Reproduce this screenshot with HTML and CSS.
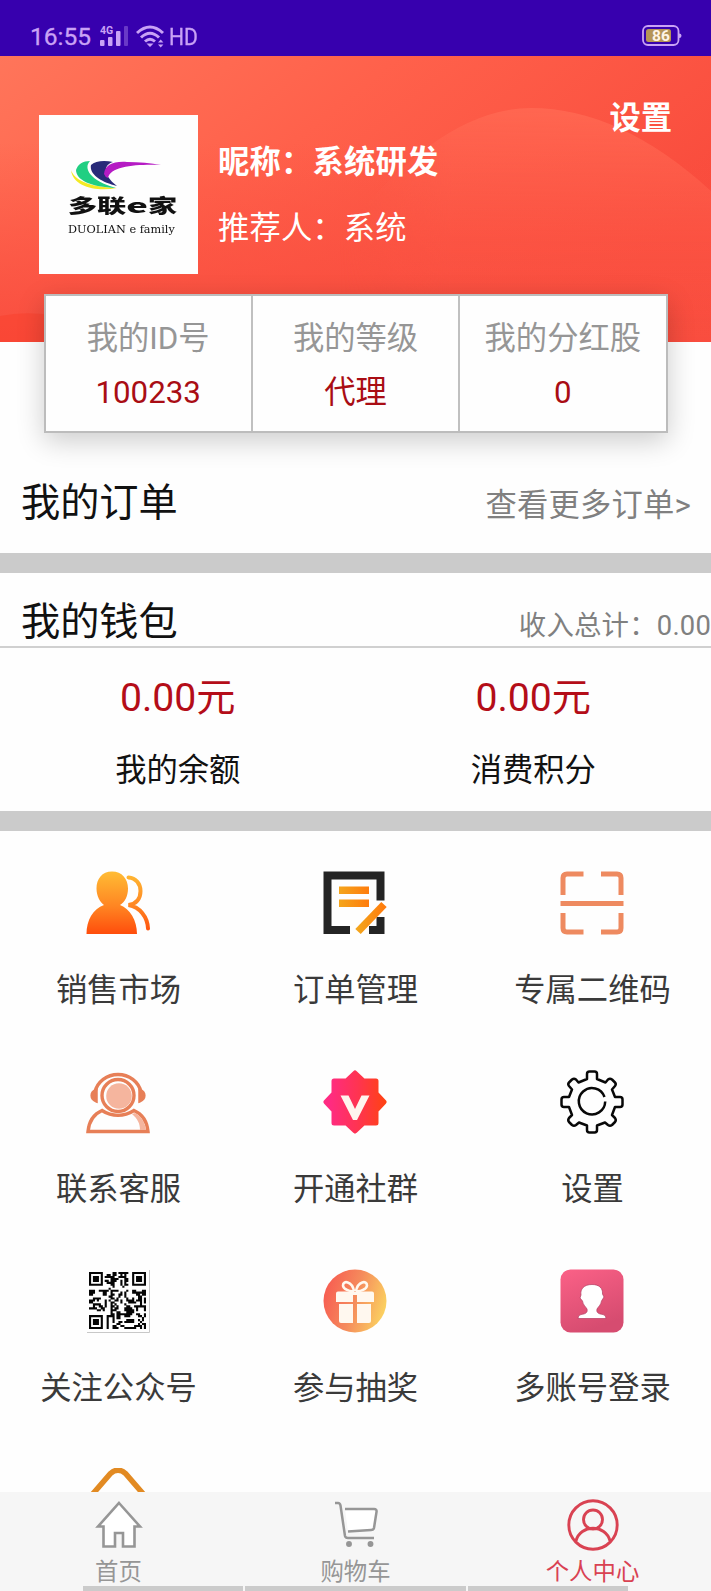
FILE: index.html
```html
<!DOCTYPE html>
<html lang="zh-CN">
<head>
<meta charset="utf-8">
<title>个人中心</title>
<link rel="stylesheet" href="styles.css">
</head>
<body>
<div class="app">
  <div class="status">
    <span class="clock">16:55</span>
    <svg class="signal" width="29" height="22" viewBox="0 0 29 22" fill="#c9a2f5"><text x="0" y="9" font-size="10.500" font-weight="700" font-family="Roboto, sans-serif">4G</text><rect x="0" y="15" width="4.500" height="6" rx="1"/><rect x="8" y="12" width="4.500" height="9" rx="1"/><rect x="16" y="6" width="4.500" height="15" rx="1"/><rect x="24" y="1" width="4" height="20" rx="1" opacity=".35"/></svg>
    <svg class="wifi" width="29" height="23" viewBox="0 0 29 23" fill="none" stroke="#c9a2f5" stroke-width="3"><path d="M1 8Q14 -4 27 8M5 12.500Q14 4 23 12.500M9 16.500Q14 12 19 16.500"/><path d="M10.500 18.500h7L14 22zM22 17.500l2.700-3 2.700 3zM22 19.500l2.700 3 2.700-3z" fill="#c9a2f5" stroke="none"/></svg>
    <span class="hd">HD</span>
    <svg class="battery" width="40" height="22" viewBox="0 0 40 22"><rect x="1" y="1" width="35.500" height="19" rx="5" fill="none" stroke="#c9a2f5" stroke-width="1.800"/><path d="M37 8.500q2.500 0 2.500 2.200t-2.500 2.200z" fill="#c9a2f5"/><rect x="4" y="4" width="25" height="13" rx="2.500" fill="#b59457"/><text x="10" y="16" font-size="15.500" font-weight="700" fill="#fff4e6" font-family="Roboto, sans-serif">86</text></svg>
  </div>

  <header class="hero">
    <svg class="hero-bg" width="711" height="286" viewBox="0 0 711 286">
      <defs>
        <linearGradient id="base" x1="0" y1="0" x2="1" y2=".5"><stop offset="0" stop-color="#ff755a"/><stop offset=".45" stop-color="#ff614b"/><stop offset="1" stop-color="#f94b3c"/></linearGradient>
        <linearGradient id="low" x1="0" y1="0" x2="0" y2="1"><stop offset=".3" stop-color="#fb4f40" stop-opacity="0"/><stop offset="1" stop-color="#f94e3f"/></linearGradient>
        <linearGradient id="hill" x1="0" y1="0" x2="0" y2="1"><stop offset="0" stop-color="#ff6852" stop-opacity=".9"/><stop offset=".55" stop-color="#fc5645" stop-opacity=".6"/><stop offset="1" stop-color="#fa5142" stop-opacity="0"/></linearGradient>
        <linearGradient id="fade" x1="0" x2="1"><stop offset="0" stop-color="#fff" stop-opacity="0"/><stop offset=".3" stop-color="#fff"/></linearGradient>
        <mask id="hillmask"><rect x="340" width="371" height="286" fill="url(#fade)"/></mask>
      </defs>
      <rect width="711" height="286" fill="url(#base)"/>
      <rect width="711" height="286" fill="url(#low)"/>
      <path d="M340 286V180Q440 52 531 52Q620 52 711 135V286Z" fill="url(#hill)" mask="url(#hillmask)"/>
      <path d="M0 260Q40 252 90 268V286H0Z" fill="#fa4532" opacity=".7"/>
    </svg>
    <div class="profile">
      <div class="avatar">
        <svg class="swoosh" width="92" height="29" viewBox="0 0 92 29"><path d="M0 9C3 18 16 26 46 27C26 31 2 26 0 9Z" fill="#f3ea25"/><path d="M5 9C7 3 12 0 19 0C12 7 19 20 45 27C20 26 5 19 5 9Z" fill="#21cf82"/><path d="M20 4C24 0 33-1 42 1C32 4 32 14 46 25C30 21 18 13 20 4Z" fill="#292a78"/><path d="M33 13C34 4 42 0 56 1C68 1 80 2 90 4C67 3 39 5 37 17Q34 16 33 13Z" fill="#b51bc4"/></svg>
        <div class="brand">多联<span>e</span>家</div>
        <div class="brand-en">DUOLIAN e family</div>
      </div>
      <div class="who">
        <div class="nick">昵称：系统研发</div>
        <div class="ref">推荐人：系统</div>
      </div>
      <div class="set">设置</div>
    </div>
  </header>

  <section class="stats">
    <div class="stat"><div class="k">我的ID号</div><div class="v">100233</div></div>
    <div class="stat"><div class="k">我的等级</div><div class="v">代理</div></div>
    <div class="stat"><div class="k">我的分红股</div><div class="v">0</div></div>
  </section>

  <section class="orders"><h2>我的订单</h2><span class="more">查看更多订单&gt;</span></section>

  <section class="wallet">
    <div class="wallet-head"><h2>我的钱包</h2><span class="total">收入总计：0.00</span></div>
    <div class="wallet-body">
      <div><div class="amount">0.00元</div><div class="label">我的余额</div></div>
      <div><div class="amount">0.00元</div><div class="label">消费积分</div></div>
    </div>
  </section>

  <main class="menu">
    <div class="item">
      <svg width="64" height="64" viewBox="0 0 64 64"><defs><linearGradient id="or" gradientUnits="userSpaceOnUse" x1="0" y1="0" x2="0" y2="64"><stop stop-color="#ffbd35"/><stop offset=".55" stop-color="#ff8522"/><stop offset="1" stop-color="#ff4b0b"/></linearGradient></defs><path d="M26 .500C16 .500 10.500 8 10.500 17.500C10.500 25 14 31 18 34C7 38 .500 49 .500 63H51C51 49 44 38 34 34C39 31 42 25 42 17.500C42 8 36 .500 26 .500Z" fill="url(#or)"/><path d="M42.500 6.500C50 7 54.500 13 54.500 20C54.500 28 50 33 42.500 34C54 36 61.500 46 62 57.500" fill="none" stroke="url(#or)" stroke-width="4" stroke-linecap="round"/></svg>
      <span>销售市场</span>
    </div>
    <div class="item">
      <svg width="64" height="64" viewBox="0 0 64 64"><defs><linearGradient id="bar"><stop stop-color="#f4a51c"/><stop offset="1" stop-color="#ff7c0c"/></linearGradient></defs><path d="M27 59H4.500V4.500H57.500V29.500M46 59H57.500V46" fill="none" stroke="#242424" stroke-width="8"/><path d="M16 15.500H46V23H16zM16 28.500H46V36H16z" fill="url(#bar)"/><path d="M35 60.500L61 33.500" stroke="url(#bar)" stroke-width="7.500"/></svg>
      <span>订单管理</span>
    </div>
    <div class="item">
      <svg width="64" height="64" viewBox="0 0 64 64" fill="none" stroke="#ee8a60" stroke-width="5"><path d="M3 24V7Q3 3 7 3H23.500M41 3H57Q61 3 61 7V24M3 42V57Q3 61 7 61H23.500M41 61H57Q61 61 61 57V42M.500 32.500H63.500"/></svg>
      <span>专属二维码</span>
    </div>
    <div class="item">
      <svg width="64" height="64" viewBox="0 0 64 64" fill="none" stroke="#e77f57" stroke-width="3.400"><path d="M9 22A23.500 22 0 0 1 55 22"/><path d="M10.500 20C4 22 4 29 10.500 31.500ZM53.500 20C60 22 60 29 53.500 31.500Z" fill="#e77f57" stroke-width="2.500"/><circle cx="32" cy="25.500" r="16"/><circle cx="33" cy="26" r="12.800" fill="#f5b59e" stroke="none"/><path d="M16 40.500C8 44 3 51 2 61.500H62C61 51 56 44 48 40.500C38 47 26 47 16 40.500Z"/><path d="M46 44C52 49 54 54 54 60H60C59 52 55 46 49 43Z" fill="#f5b59e" stroke="none"/></svg>
      <span>联系客服</span>
    </div>
    <div class="item">
      <svg width="64" height="64" viewBox="0 0 64 64"><defs><linearGradient id="vip" gradientUnits="userSpaceOnUse" x1="0" y1="0" x2="64" y2="0"><stop offset=".1" stop-color="#ff2b82"/><stop offset=".55" stop-color="#ff3450"/><stop offset="1" stop-color="#ff4310"/></linearGradient></defs><path d="M32 3L40.500 11H53V23.500L61 32L53 40.500V53H40.500L32 61L23.500 53H11V40.500L3 32L11 23.500V11H23.500Z" fill="url(#vip)" stroke="url(#vip)" stroke-width="5" stroke-linejoin="round"/><path d="M17.500 25.500H25.500L32 39L38.500 25.500H46.500L34 50H30Z" fill="#fff5ee"/></svg>
      <span>开通社群</span>
    </div>
    <div class="item">
      <svg width="64" height="64" viewBox="0 0 64 64" fill="none" stroke="#080808" stroke-width="2.500" stroke-linejoin="round"><path d="M27 9V4Q27 1.500 29.500 1.500H34.500Q37 1.500 37 4V9L45.500 12.500L48 9.500Q50 8 52 9.500L55 12.500Q56.500 14 55 16L52 19.500L55 27H60Q62.500 27 62.500 29.500V34.500Q62.500 37 60 37H55L52 45L55 48Q56.500 50 55 52L52 55Q50 56.500 48 55L45 52.500L37 55.500V60Q37 62.500 34.500 62.500H29.500Q27 62.500 27 60V55.500L19 52.500L16 55Q14 56.500 12 55L9 52Q7.500 50 9 48L12 45L9 37H4Q1.500 37 1.500 34.500V29.500Q1.500 27 4 27H9L12 19.500L9 16Q7.500 14 9 12.500L12 9.500Q14 8 16 9.500L18.500 12.500Z"/><path d="M44.500 27A13.200 13.200 0 1 0 45.200 31.500"/></svg>
      <span>设置</span>
    </div>
    <div class="item">
      <svg id="qr" width="64" height="64" viewBox="0 0 64 64"><path d="M1 63.500H63.500V1" fill="none" stroke="#c8c8c8"/></svg>
      <span>关注公众号</span>
    </div>
    <div class="item">
      <svg width="64" height="64" viewBox="0 0 64 64"><defs><linearGradient id="gift" x1="0" y1=".3" x2="1" y2=".6"><stop stop-color="#f75b51"/><stop offset=".5" stop-color="#f58b5c"/><stop offset="1" stop-color="#fbd260"/></linearGradient></defs><circle cx="32" cy="32" r="31.500" fill="url(#gift)"/><g fill="#fff8ef"><path d="M15 22.500H49Q51 22.500 51 24.500V33H34V26H30V33H13V24.500Q13 22.500 15 22.500Z"/><path d="M16 35H30V54H18Q16 54 16 52ZM34 35H48V52Q48 54 46 54H34Z"/></g><path d="M31 22C27 23 20 20 20 16.500C20 11 29 12 31 22M33 22C37 23 44 20 44 16.500C44 11 35 12 33 22" fill="none" stroke="#fff8ef" stroke-width="2.600"/></svg>
      <span>参与抽奖</span>
    </div>
    <div class="item">
      <svg width="64" height="64" viewBox="0 0 64 64"><defs><linearGradient id="acc" x1="0" y1="0" x2=".4" y2="1"><stop stop-color="#fb6187"/><stop offset="1" stop-color="#d64c70"/></linearGradient></defs><rect x=".5" y=".5" width="63" height="63" rx="10" fill="url(#acc)"/><path d="M32 15.500C24 15.500 20 20 21 26L20 29L22.500 32C23 36 26 38 27 40C28 44 25 45 21 45.500Q18 46 18 49.500H46Q46 46 43 45.500C39 45 36 44 37 40C38 38 41 36 41.500 32L44 28L42.500 25C43 19 39 15.500 32 15.500Z" fill="#fff" stroke="#b13c61" stroke-width=".7"/></svg>
      <span>多账号登录</span>
    </div>
    <div class="item">
      <svg width="64" height="64" viewBox="0 0 64 64"><path d="M5 28L24.500 5.500Q32 -1 39.500 5.500L59 28" fill="none" stroke="#e28a22" stroke-width="5.500"/></svg>
    </div>
  </main>

  <nav class="tabs">
    <div class="tab">
      <svg width="50" height="50" viewBox="0 0 50 50"><path d="M25 3L46 26.500H40.500V46.500H29V33H21V46.500H9.500V26.500H4Z" fill="#fff" stroke="#969696" stroke-width="2.600"/></svg>
      <span>首页</span>
    </div>
    <div class="tab">
      <svg width="50" height="50" viewBox="0 0 50 50" fill="none" stroke="#969696" stroke-width="2.500"><path d="M14 9H45L41 30L17 31.500Z" fill="#fff" stroke="none"/><path d="M4 3H7Q9 3 9.500 5.500L14 36Q14.500 38 17 38H43M14 9H43Q46 9 45.500 12L43 28Q42.500 30 40 30L17 31.500"/><circle cx="18" cy="44" r="1.700" fill="#969696"/><circle cx="39.500" cy="44" r="1.700" fill="#969696"/></svg>
      <span>购物车</span>
    </div>
    <div class="tab active">
      <svg width="54" height="54" viewBox="0 0 54 54" fill="none" stroke="#d94252" stroke-width="2.900"><circle cx="27" cy="27" r="24.200"/><circle cx="27" cy="21.500" r="9.500"/><path d="M10 43C14 26 40 26 44 43"/></svg>
      <span>个人中心</span>
    </div>
    <div class="strip"><i></i><i class="mid"></i><i></i></div>
  </nav>
</div>
<script src="qr.js"></script>
</body>
</html>
```
FILE: styles.css
```css
* { box-sizing: border-box; }
body { margin: 0; background: #fefefe; font-family: Roboto, "Noto Sans CJK SC", sans-serif; font-size: 31.300px; color: #111; }
svg { display: block; flex: none; }
.app { width: 711px; height: 1591px; overflow: hidden; display: flex; flex-direction: column; position: relative; }
.status { height: 56px; flex: none; background: #3700ae; display: flex; align-items: flex-start; padding: 25px 29px 0 30px; color: #c9a2f5; }
.clock { font-size: 24.500px; line-height: 24px; width: 70px; -webkit-text-stroke: .3px; }
.signal { width: 29px; }
.wifi { margin-left: 7px; }
.hd { font-size: 24.500px; line-height: 24px; margin-left: 4px; transform: scaleX(.86); transform-origin: left; -webkit-text-stroke: .3px; }
.battery { margin-left: auto; width: 40px; }

.hero { height: 286px; flex: none; position: relative; overflow: hidden; }
.hero-bg { position: absolute; inset: 0; }
.profile { position: relative; display: flex; align-items: flex-start; padding: 59px 39px 0 39px; color: #fff; }
.avatar { width: 159px; height: 159px; background: #fefefe; color: #111; display: flex; flex-direction: column; align-items: center; padding-top: 46px; }
.swoosh { margin-right: 4px; }
.brand { font: 900 27px/30px "Noto Sans CJK SC", sans-serif; white-space: nowrap; height: 30px; margin-left: 8px; transform: scale(1.08, .72); }
.brand span { font-size: 25px; display: inline-block; transform: scaleX(1.350); width: 20px; text-align: center; }
.brand-en { font: 11.500px/14px "DejaVu Serif", serif; white-space: nowrap; margin: 2px 0 0 6px; transform: scaleX(.98); }
.who { margin-left: 20px; padding-top: 25px; }
.nick { font-weight: 700; line-height: 46px; letter-spacing: .2px; }
.ref { line-height: 46px; margin-top: 20px; letter-spacing: .15px; }
.set { margin-left: auto; margin-top: -19px; font-weight: 700; line-height: 46px; }

.stats { position: relative; flex: none; width: 624px; height: 139px; margin: -48px 0 0 43.500px; display: flex; background: #fefefe; border: 2px solid #bcbcbc; box-shadow: 0 8px 26px rgba(0,0,0,.2); text-align: center; }
.stat { flex: 1; padding-top: 20px; }
.stat + .stat { border-left: 2px solid #c0c0c0; }
.k { color: #969696; line-height: 46px; }
.v { color: #a90d14; line-height: 46px; margin-top: 8px; }

h2 { margin: 0; font-weight: 400; font-size: 39.200px; line-height: 58px; }
.orders { height: 140px; flex: none; display: flex; justify-content: space-between; padding: 41px 20px 0 21px; border-bottom: 20px solid #cbcbcb; }
.more { color: #808080; line-height: 46px; margin-top: 9px; letter-spacing: .2px; }
.wallet { height: 258px; flex: none; border-bottom: 20px solid #cbcbcb; }
.wallet-head { height: 75px; display: flex; justify-content: space-between; padding: 20px 0 0 21px; border-bottom: 2px solid #d0d0d0; }
.total { color: #808080; font-size: 27.400px; line-height: 40px; margin-top: 13px; letter-spacing: .2px; }
.wallet-body { display: flex; text-align: center; padding-top: 21px; }
.wallet-body > div { flex: 1; }
.amount { color: #b40d18; font-size: 39.200px; line-height: 58px; }
.label { line-height: 46px; margin-top: 21px; }

.menu { flex: none; display: grid; grid-template-columns: repeat(3, 237px); grid-auto-rows: 199px; padding-top: 40px; height: 661px; overflow: hidden; }
.item { display: flex; flex-direction: column; align-items: center; color: #3a3a3a; }
.item svg { margin-right: 1px; }
.item span { line-height: 46px; margin-top: 33px; white-space: nowrap; }

.tabs { flex: none; height: 99px; display: grid; grid-template-columns: repeat(3, 237px); background: #f6f6f6; color: #969696; position: relative; font-size: 23.400px; }
.tab { display: flex; flex-direction: column; align-items: center; padding-top: 8px; }
.tab span { line-height: 34px; margin-top: 5px; }
.tab.active { color: #d94252; padding-top: 6px; }
.tab.active span { margin-top: 3px; }
.strip { position: absolute; left: 83px; bottom: 0; display: flex; gap: 2px; height: 5px; width: 545px; }
.strip i { flex: 160; background: #cbcbcb; }
.strip .mid { flex: 221; }
```
FILE: qr.js
```js
// Module map of the follow-us code, one string per row.
const rows = [
  "1111111.....11.11111..1111111",
  "1.....1..11.11..1.1...1.....1",
  "1.111.1.11111..1111...1.111.1",
  "1.111.1....1111...11..1.111.1",
  "1.111.1.11.111..1.11..1.111.1",
  "1.....1..1111...1.1...1.....1",
  "1111111....11...1.11..1111111",
  "............1....1...........",
  "..........1..................",
  "111..11111.1111....1..11...11",
  "111....11..1....1.1...1111111",
  "11.....11..11..11.1.....11.11",
  "..........11...1..1......11..",
  "..1111.....11.1....1..1..11.1",
  "111.1...1.1..11.1..1111.111.1",
  "11......1..11...1...1111..1.1",
  "..1111..1..1.1....1.......1..",
  "..1..11.1..11.1....11..111111",
  "1111..11...1.11...1111..1...1",
  "....11.1...111....11111.1...1",
  "...........1..11...1111......",
  "...........11.11111111..11..1",
  "1111111..1111.11..111....11.1",
  "1.....1..1..1.11...........1.",
  "1.111.1..1..1......1111..1.1.",
  "1.111.1..1..1..11.11111...1..",
  "1.111.1..1....11.........1.11",
  "1.....1..1..11..11.....1111.1",
  "1111111..1..111...111111..1.1"
];
const unit = 1.96;
let d = "";
rows.forEach((row, y) => {
  [...row].forEach((c, x) => {
    if (c === "1") d += `M${3 + x * unit} ${3 + y * unit}h${unit + 0.15}v${unit + 0.15}h-${unit + 0.15}z`;
  });
});
const path = document.createElementNS("http://www.w3.org/2000/svg", "path");
path.setAttribute("d", d);
path.setAttribute("fill", "#050505");
document.getElementById("qr").append(path);
```
